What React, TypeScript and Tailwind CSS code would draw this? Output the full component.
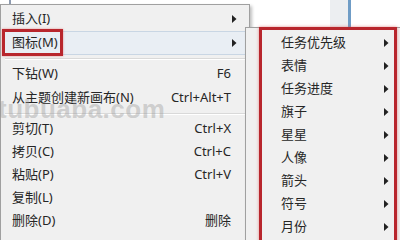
import { FC } from "react";

type Item = { label: string; shortcut?: string; sub?: boolean; hot?: boolean; tight?: boolean } | "sep";

const mainItems: Item[] = [
  { label: "插入(I)", sub: true },
  { label: "图标(M)", sub: true, hot: true },
  "sep",
  { label: "下钻(W)", shortcut: "F6" },
  { label: "从主题创建新画布(N)", shortcut: "Ctrl+Alt+T" },
  "sep",
  { label: "剪切(T)", shortcut: "Ctrl+X", tight: true },
  { label: "拷贝(C)", shortcut: "Ctrl+C", tight: true },
  { label: "粘贴(P)", shortcut: "Ctrl+V", tight: true },
  { label: "复制(L)", tight: true },
  { label: "删除(D)", shortcut: "删除", tight: true },
];

const subItems = ["任务优先级", "表情", "任务进度", "旗子", "星星", "人像", "箭头", "符号", "月份"];

const Arrow: FC = () => (
  <svg width="5" height="8" viewBox="0 0 5 8" className="shrink-0">
    <path d="M0 0 L4.5 4 L0 8 Z" fill="#222" />
  </svg>
);

const App: FC = () => {
  return (
    <div
      className="relative w-[400px] h-[240px] overflow-hidden bg-white text-[13px] text-[#262626]"
      style={{ fontFamily: '"Noto Sans", "Noto Sans CJK SC", sans-serif' }}
    >
      {/* background window bits behind the menus */}
      <div className="absolute left-[9px] top-0 w-[2px] h-[6px] bg-[#8e9bb0]" />
      <div className="absolute left-[330px] top-0 w-[18px] h-[30px] bg-[#eceef1]" />
      <div className="absolute left-[348px] top-0 w-[3px] h-[30px] bg-[#6f9cc6]" />

      {/* main context menu */}
      <div className="absolute left-0 top-[4px] w-[250px] h-[250px] bg-[#f0f0f0] border border-[#a0a0a0] shadow-[2px_2px_3px_rgba(0,0,0,0.25)] py-[2px] px-[2px] flex flex-col">
        {mainItems.map((it, i) =>
          it === "sep" ? (
            <div key={i} className="h-[7px] flex flex-col justify-center px-[2px]">
              <div className="h-px bg-[#d9d9d9]" />
              <div className="h-px bg-white" />
            </div>
          ) : (
            <div
              key={i}
              className={`${it.tight ? "h-[23px]" : "h-6"} flex items-center pl-[8px] pr-[9px] ${
                it.hot ? "bg-[#e9eef4] border border-[#c9d6e4] rounded-[2px]" : "border border-transparent"
              }`}
            >
              <span className="flex-1 whitespace-nowrap">{it.label}</span>
              {it.shortcut && <span className="mr-[6px] whitespace-nowrap">{it.shortcut}</span>}
              {it.sub && <Arrow />}
            </div>
          )
        )}
      </div>

      {/* watermark */}
      <div
        className="absolute left-[-2px] top-[96px] text-[26px] font-bold leading-none tracking-[0.5px] text-[rgba(150,150,150,0.4)] pointer-events-none"
        style={{ fontFamily: '"Liberation Sans", sans-serif' }}
      >
        tubuaba.com
      </div>

      {/* red annotation around 图标 */}
      <div className="absolute left-[2px] top-[29px] w-[61px] h-[27px] border-[3px] border-[#b8262d] shadow-[0_0_2px_rgba(220,80,80,0.6)]" />

      {/* submenu */}
      <div className="absolute left-[245px] top-[27px] w-[160px] h-[230px] bg-[#f0f0f0] border border-[#a0a0a0] shadow-[2px_2px_3px_rgba(0,0,0,0.25)] pt-[3px] pl-[14px] flex flex-col">
        {subItems.map((s) => (
          <div key={s} className="h-[23px] flex items-center pl-[21px] pr-[15px]">
            <span className="flex-1 whitespace-nowrap">{s}</span>
            <Arrow />
          </div>
        ))}
      </div>

      {/* red annotation around submenu */}
      <div className="absolute left-[259px] top-[27px] w-[138px] h-[220px] border-[3px] border-[#b8262d] shadow-[0_0_3px_rgba(220,80,80,0.6)]" />
    </div>
  );
};

export default App;
